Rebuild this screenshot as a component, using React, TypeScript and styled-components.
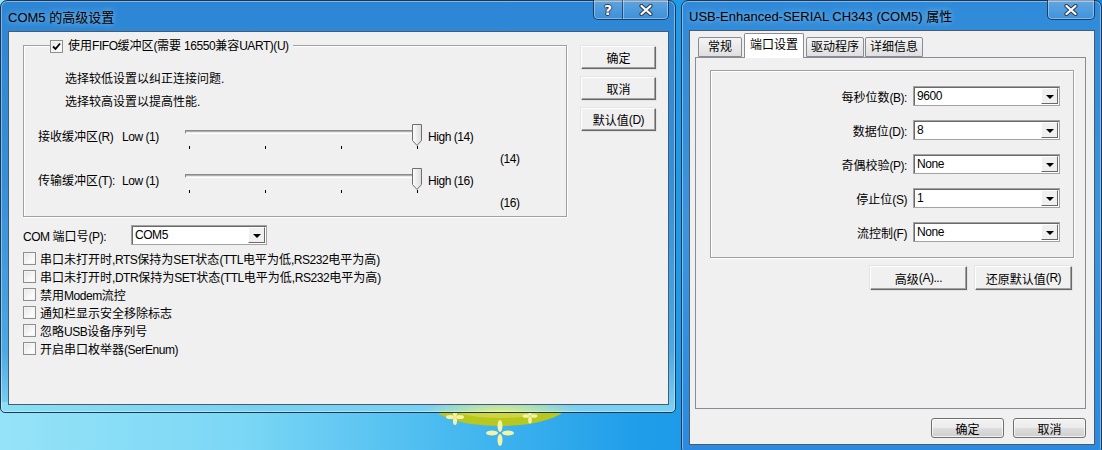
import styled, { createGlobalStyle } from "styled-components"

const GlobalStyle = createGlobalStyle`
  html, body {
    margin: 0;
    padding: 0;
  }
  body {
    font-family: "Liberation Sans", "Noto Sans CJK SC", sans-serif;
    font-size: 12px;
    color: #000;
  }
`

const Desktop = styled.div`
  position: relative;
  width: 1102px;
  height: 450px;
  overflow: hidden;
  background: linear-gradient(90deg, #95e3f8 0%, #7bd7f5 22%, #45b8ef 42%, #1f9de9 58%, #1589e0 100%);
`

const Scenery = styled.svg`
  position: absolute;
  left: 400px;
  top: 396px;
`

// windows sit on a free desktop, so they get coordinates
const Window = styled.div<{ $x: number; $y: number; $w: number; $h: number; $glow?: boolean }>`
  position: absolute;
  left: ${(p) => p.$x}px;
  top: ${(p) => p.$y}px;
  width: ${(p) => p.$w}px;
  height: ${(p) => p.$h}px;
  box-sizing: border-box;
  display: flex;
  flex-direction: column;
  padding: 0 6px 7px 7px;
  border: 1px solid #1d3653;
  border-radius: 7px 7px 5px 5px;
  background: ${(p) =>
    p.$glow
      ? "radial-gradient(ellipse 80px 14px at 500px 100%, rgba(232,240,120,0.95), rgba(232,240,120,0) 100%), linear-gradient(90deg, rgba(140,225,245,0.9), rgba(140,225,245,0) 40%) bottom / 100% 10px no-repeat, linear-gradient(180deg, #2c86d5 0%, #3590da 45%, #4aa9e6 85%, #7cd3f3 100%)"
      : "linear-gradient(180deg, #2f8ad9 0%, #3a95dd 50%, #2b8ae0 100%)"};
  box-shadow: inset 0 0 0 1px rgba(255, 255, 255, 0.4);
`

const TitleBar = styled.div<{ $h: number }>`
  height: ${(p) => p.$h}px;
  display: flex;
  align-items: center;
  flex-shrink: 0;
`

const TitleText = styled.span`
  font-size: 13px;
  color: #000;
  text-shadow: 0 0 6px rgba(255, 255, 255, 0.6);
  white-space: nowrap;
`

const CaptionButtons = styled.div`
  margin-left: auto;
  align-self: flex-start;
  margin-top: -1px;
  display: flex;
  border: 1px solid rgba(10, 30, 60, 0.75);
  border-top: none;
  border-radius: 0 0 5px 5px;
  overflow: hidden;
  box-shadow: inset 0 0 0 1px rgba(255, 255, 255, 0.35);
  background: linear-gradient(180deg, rgba(255, 255, 255, 0.25), rgba(255, 255, 255, 0.08));
`

const CaptionButton = styled.div<{ $w: number }>`
  width: ${(p) => p.$w}px;
  height: 19px;
  display: flex;
  align-items: center;
  justify-content: center;
  & + & {
    border-left: 1px solid rgba(10, 30, 60, 0.6);
    box-shadow: inset 1px 0 0 rgba(255, 255, 255, 0.35);
  }
`

const HelpGlyph = styled.span`
  font-family: "DejaVu Sans", sans-serif;
  font-weight: bold;
  font-size: 14px;
  color: #fff;
  text-shadow: 1px 0 0 #2c3c52, -1px 0 0 #2c3c52, 0 1px 0 #2c3c52, 0 -1px 0 #2c3c52;
`

const Client = styled.div`
  flex: 1;
  display: flex;
  flex-direction: column;
  background: #f0f0f0;
  border: 1px solid #4b5a6c;
`

/* ---------- text: latin runs are set tighter, like Tahoma next to YaHei ---------- */

const Latin = styled.span`
  letter-spacing: -0.45px;
`

const T = ({ children }: { children: string }) => (
  <>
    {children
      .split(/([\x20-\x7e]+)/)
      .filter((part) => part !== "")
      .map((part, i) => (/^[\x20-\x7e]+$/.test(part) ? <Latin key={i}>{part}</Latin> : part))}
  </>
)

/* ---------- shared controls ---------- */

const ClassicButton = styled.div<{ $w: number; $h: number }>`
  box-sizing: border-box;
  width: ${(p) => p.$w}px;
  height: ${(p) => p.$h}px;
  display: flex;
  align-items: center;
  justify-content: center;
  background: #f0f0f0;
  border: 1px solid;
  border-color: #fff #696969 #696969 #fff;
  box-shadow: inset -1px -1px 0 #a0a0a0, 1px 1px 0 #e3e3e3, -1px -1px 0 #e3e3e3;
`

const AeroButton = styled.div<{ $w: number; $h: number }>`
  box-sizing: border-box;
  width: ${(p) => p.$w}px;
  height: ${(p) => p.$h}px;
  display: flex;
  align-items: center;
  justify-content: center;
  border: 1px solid #707070;
  border-radius: 3px;
  background: linear-gradient(180deg, #f2f2f2 0%, #ebebeb 50%, #dddddd 51%, #cfcfcf 100%);
  box-shadow: inset 0 0 0 1px rgba(255, 255, 255, 0.7);
`

const Combo = styled.div<{ $w: number }>`
  box-sizing: border-box;
  width: ${(p) => p.$w}px;
  height: 20px;
  display: flex;
  background: #fff;
  border: 1px solid #a3a3a3;
  box-shadow: inset 1px 1px 0 #696969;
`

const ComboText = styled.span`
  flex: 1;
  padding-left: 3px;
  line-height: 18px;
  letter-spacing: -0.45px;
`

const DropButton = styled.span`
  box-sizing: border-box;
  width: 17px;
  margin: 1px 1px 1px 0;
  display: flex;
  align-items: center;
  justify-content: center;
  background: #f0f0f0;
  border: 1px solid;
  border-color: #fff #696969 #696969 #fff;
  &::after {
    content: "";
    border-left: 4px solid transparent;
    border-right: 4px solid transparent;
    border-top: 4px solid #000;
    margin-top: 1px;
  }
`

const CheckBox = styled.span`
  box-sizing: border-box;
  width: 13px;
  height: 13px;
  flex-shrink: 0;
  display: flex;
  align-items: center;
  justify-content: center;
  border: 1px solid #8e8f8f;
  background: linear-gradient(135deg, #e4e4e4 0%, #fbfbfb 70%);
  box-shadow: inset 0 0 0 1px #f4f4f4;
`

const CheckMark = () => (
  <svg width="9" height="9" viewBox="0 0 9 9">
    <path d="M1 4.5 L3.5 7 L8 1.5" fill="none" stroke="#000" strokeWidth="1.8" />
  </svg>
)

const CloseGlyph = () => (
  <svg width="14" height="12" viewBox="0 0 14 12">
    <path d="M2.5 2 L11.5 10 M11.5 2 L2.5 10" stroke="#2c3c52" strokeWidth="4.2" strokeLinecap="round" />
    <path d="M2.5 2 L11.5 10 M11.5 2 L2.5 10" stroke="#fff" strokeWidth="2.2" strokeLinecap="round" />
  </svg>
)

const GroupFrame = styled.div<{ $w: number; $h: number }>`
  position: relative;
  box-sizing: border-box;
  width: ${(p) => p.$w}px;
  height: ${(p) => p.$h}px;
  border: 1px solid #a0a0a0;
  box-shadow: 1px 1px 0 #fff, inset 1px 1px 0 #fff;
`

/* ---------- left dialog ---------- */

const LeftBody = styled.div`
  display: flex;
  padding: 13px 0 0 14px;
`

const MainColumn = styled.div`
  width: 544px;
  display: flex;
  flex-direction: column;
`

const ButtonColumn = styled.div`
  margin-left: 14px;
  padding-top: 1px;
  display: flex;
  flex-direction: column;
  gap: 8px;
`

const Legend = styled.label`
  position: absolute;
  top: -8px;
  left: 26px;
  display: flex;
  align-items: center;
  gap: 5px;
  padding: 0 4px 0 0;
  background: #f0f0f0;
  line-height: 16px;
`

const GroupContent = styled.div`
  padding-top: 23px;
  display: flex;
  flex-direction: column;
`

const Hint = styled.div`
  margin-left: 41px;
  line-height: 20px;
  & + & {
    margin-top: 3px;
  }
`

const SliderBlock = styled.div<{ $first?: boolean }>`
  margin-top: ${(p) => (p.$first ? 13 : 0)}px;
  display: flex;
  flex-direction: column;
`

const SliderRow = styled.div`
  height: 24px;
  display: flex;
  padding-left: 14px;
`

const SliderLabel = styled.span<{ $w: number }>`
  width: ${(p) => p.$w}px;
  line-height: 24px;
  white-space: nowrap;
`

const Trackbar = styled.div`
  position: relative;
  width: 236px;
  display: flex;
  flex-direction: column;
`

const Track = styled.div`
  margin-top: 5px;
  width: 233px;
  height: 4px;
  box-sizing: border-box;
  background: #e7eaea;
  border: 1px solid;
  border-color: #8a8a8a #fff #fff #8a8a8a;
  box-shadow: inset 0 1px 0 #b0b0b0;
`

const Ticks = styled.div`
  margin: 12px 0 0 4px;
  width: 229px;
  height: 3px;
  display: flex;
  justify-content: space-between;
`

const Tick = styled.span`
  width: 1px;
  height: 3px;
  background: #000;
`

const Thumb = styled.svg`
  position: absolute;
  left: 227px;
  top: -1px;
`

const HighLabel = styled.span`
  margin-left: 7px;
  line-height: 24px;
  white-space: nowrap;
`

const ValueRow = styled.div`
  height: 20px;
  line-height: 20px;
  padding-left: 476px;
`

const PortRow = styled.div`
  margin-top: 8px;
  height: 20px;
  display: flex;
  align-items: center;
`

const PortLabel = styled.span`
  width: 108px;
`

const OptionList = styled.div`
  margin-top: 4px;
  display: flex;
  flex-direction: column;
`

const OptionRow = styled.label`
  height: 18px;
  display: flex;
  align-items: center;
  gap: 4px;
  white-space: nowrap;
`

/* ---------- right dialog ---------- */

const TabStrip = styled.div`
  height: 26px;
  display: flex;
  align-items: flex-end;
  gap: 1px;
  padding-left: 8px;
  position: relative;
  z-index: 1;
`

const Tab = styled.div<{ $active?: boolean }>`
  box-sizing: border-box;
  min-width: 44px;
  height: ${(p) => (p.$active ? 25 : 20)}px;
  margin: 0 ${(p) => (p.$active ? 1 : 0)}px ${(p) => (p.$active ? -1 : 0)}px;
  padding: ${(p) => (p.$active ? "2px 5px 0" : "0 4px")};
  display: flex;
  align-items: ${(p) => (p.$active ? "flex-start" : "center")};
  justify-content: center;
  line-height: 18px;
  font-size: 12px;
  border: 1px solid #898c95;
  border-bottom: ${(p) => (p.$active ? "none" : "1px solid #898c95")};
  border-radius: 2px 2px 0 0;
  background: ${(p) => (p.$active ? "#fff" : "linear-gradient(180deg, #f4f4f4 0%, #eaeaea 50%, #dfdfdf 100%)")};
`

const TabPanel = styled.div`
  box-sizing: border-box;
  height: 352px;
  margin: 0 8px 0 5px;
  padding: 12px 13px 0 14px;
  border: 1px solid #898c95;
  background: #f0f0f0;
  display: flex;
  flex-direction: column;
`

const SettingsList = styled.div`
  padding: 15px 13px 0 0;
  display: flex;
  flex-direction: column;
  gap: 14px;
`

const SettingRow = styled.div`
  display: flex;
  align-items: center;
  justify-content: flex-end;
  gap: 6px;
`

const ButtonRow = styled.div<{ $top: number; $gap: number; $right: number }>`
  margin-top: ${(p) => p.$top}px;
  padding-right: ${(p) => p.$right}px;
  display: flex;
  justify-content: flex-end;
  gap: ${(p) => p.$gap}px;
`

const settings = [
  { label: "每秒位数(B):", value: "9600" },
  { label: "数据位(D):", value: "8" },
  { label: "奇偶校验(P):", value: "None" },
  { label: "停止位(S)", value: "1" },
  { label: "流控制(F)", value: "None" },
]

const options = [
  "串口未打开时,RTS保持为SET状态(TTL电平为低,RS232电平为高)",
  "串口未打开时,DTR保持为SET状态(TTL电平为低,RS232电平为高)",
  "禁用Modem流控",
  "通知栏显示安全移除标志",
  "忽略USB设备序列号",
  "开启串口枚举器(SerEnum)",
]

const sliders = [
  { label: "接收缓冲区(R)", high: "High (14)", value: "(14)" },
  { label: "传输缓冲区(T):", high: "High (16)", value: "(16)" },
]

const Slider = () => (
  <Trackbar>
    <Track />
    <Ticks>
      <Tick />
      <Tick />
      <Tick />
      <Tick />
    </Ticks>
    <Thumb width="11" height="23" viewBox="0 0 11 23">
      <defs>
        <linearGradient id="thumbFill" x1="0" y1="0" x2="1" y2="0">
          <stop offset="0" stopColor="#fdfdfd" />
          <stop offset="1" stopColor="#dcdcdc" />
        </linearGradient>
      </defs>
      <path d="M0.5 0.5 H9.5 V16.5 L5 21.5 L0.5 16.5 Z" fill="url(#thumbFill)" stroke="#6f6f6f" />
    </Thumb>
  </Trackbar>
)

const App = () => {
  return (
    <Desktop>
      <GlobalStyle />
      <Scenery width="200" height="54" viewBox="0 0 200 54">
        <ellipse cx="100" cy="6" rx="70" ry="24" fill="#b8c81e" />
        <ellipse cx="100" cy="4" rx="60" ry="18" fill="#d8dc48" opacity="0.7" />
        <g fill="#f6f3a8">
          <ellipse cx="100" cy="30" rx="2.5" ry="6" />
          <ellipse cx="100" cy="44" rx="2.5" ry="6" />
          <ellipse cx="92" cy="37" rx="6" ry="2.5" />
          <ellipse cx="108" cy="37" rx="6" ry="2.5" />
          <ellipse cx="55" cy="17" rx="2" ry="4" />
          <ellipse cx="55" cy="25" rx="2" ry="4" />
          <ellipse cx="50" cy="21" rx="4" ry="2" />
          <ellipse cx="60" cy="21" rx="4" ry="2" />
          <ellipse cx="130" cy="16" rx="1.8" ry="3.5" />
          <ellipse cx="130" cy="24" rx="1.8" ry="3.5" />
          <ellipse cx="126" cy="20" rx="3.5" ry="1.8" />
          <ellipse cx="134" cy="20" rx="3.5" ry="1.8" />
        </g>
      </Scenery>

      <Window $x={0} $y={0} $w={676} $h={413} $glow>
        <TitleBar $h={30}>
          <TitleText>COM5 的高级设置</TitleText>
          <CaptionButtons>
            <CaptionButton $w={28}>
              <HelpGlyph>?</HelpGlyph>
            </CaptionButton>
            <CaptionButton $w={45}>
              <CloseGlyph />
            </CaptionButton>
          </CaptionButtons>
        </TitleBar>
        <Client>
          <LeftBody>
            <MainColumn>
              <GroupFrame $w={544} $h={172}>
                <Legend>
                  <CheckBox>
                    <CheckMark />
                  </CheckBox>
                  <span>
                    <T>使用FIFO缓冲区(需要 16550兼容UART)(U)</T>
                  </span>
                </Legend>
                <GroupContent>
                  <Hint>
                    <T>选择较低设置以纠正连接问题.</T>
                  </Hint>
                  <Hint>
                    <T>选择较高设置以提高性能.</T>
                  </Hint>
                  {sliders.map((s, i) => (
                    <SliderBlock key={s.label} $first={i === 0}>
                      <SliderRow>
                        <SliderLabel $w={84}>
                          <T>{s.label}</T>
                        </SliderLabel>
                        <SliderLabel $w={63}>
                          <T>Low (1)</T>
                        </SliderLabel>
                        <Slider />
                        <HighLabel>
                          <T>{s.high}</T>
                        </HighLabel>
                      </SliderRow>
                      <ValueRow>
                        <T>{s.value}</T>
                      </ValueRow>
                    </SliderBlock>
                  ))}
                </GroupContent>
              </GroupFrame>
              <PortRow>
                <PortLabel>
                  <T>COM 端口号(P):</T>
                </PortLabel>
                <Combo $w={136}>
                  <ComboText>COM5</ComboText>
                  <DropButton />
                </Combo>
              </PortRow>
              <OptionList>
                {options.map((o) => (
                  <OptionRow key={o}>
                    <CheckBox />
                    <span>
                      <T>{o}</T>
                    </span>
                  </OptionRow>
                ))}
              </OptionList>
            </MainColumn>
            <ButtonColumn>
              <ClassicButton $w={75} $h={23}>确定</ClassicButton>
              <ClassicButton $w={75} $h={23}>取消</ClassicButton>
              <ClassicButton $w={75} $h={23}>
                <T>默认值(D)</T>
              </ClassicButton>
            </ButtonColumn>
          </LeftBody>
        </Client>
      </Window>

      <Window $x={681} $y={0} $w={421} $h={453}>
        <TitleBar $h={29}>
          <TitleText>USB-Enhanced-SERIAL CH343 (COM5) 属性</TitleText>
          <CaptionButtons>
            <CaptionButton $w={46}>
              <CloseGlyph />
            </CaptionButton>
          </CaptionButtons>
        </TitleBar>
        <Client>
          <TabStrip>
            <Tab>常规</Tab>
            <Tab $active>端口设置</Tab>
            <Tab>驱动程序</Tab>
            <Tab>详细信息</Tab>
          </TabStrip>
          <TabPanel>
            <GroupFrame $w={364} $h={188}>
              <SettingsList>
                {settings.map((s) => (
                  <SettingRow key={s.label}>
                    <span>
                      <T>{s.label}</T>
                    </span>
                    <Combo $w={147}>
                      <ComboText>{s.value}</ComboText>
                      <DropButton />
                    </Combo>
                  </SettingRow>
                ))}
              </SettingsList>
            </GroupFrame>
            <ButtonRow $top={8} $gap={8} $right={0}>
              <ClassicButton $w={97} $h={24}>
                <T>高级(A)...</T>
              </ClassicButton>
              <ClassicButton $w={97} $h={24}>
                <T>还原默认值(R)</T>
              </ClassicButton>
            </ButtonRow>
          </TabPanel>
          <ButtonRow $top={9} $gap={9} $right={8}>
            <AeroButton $w={73} $h={20}>确定</AeroButton>
            <AeroButton $w={73} $h={20}>取消</AeroButton>
          </ButtonRow>
        </Client>
      </Window>
    </Desktop>
  )
}

export default App
